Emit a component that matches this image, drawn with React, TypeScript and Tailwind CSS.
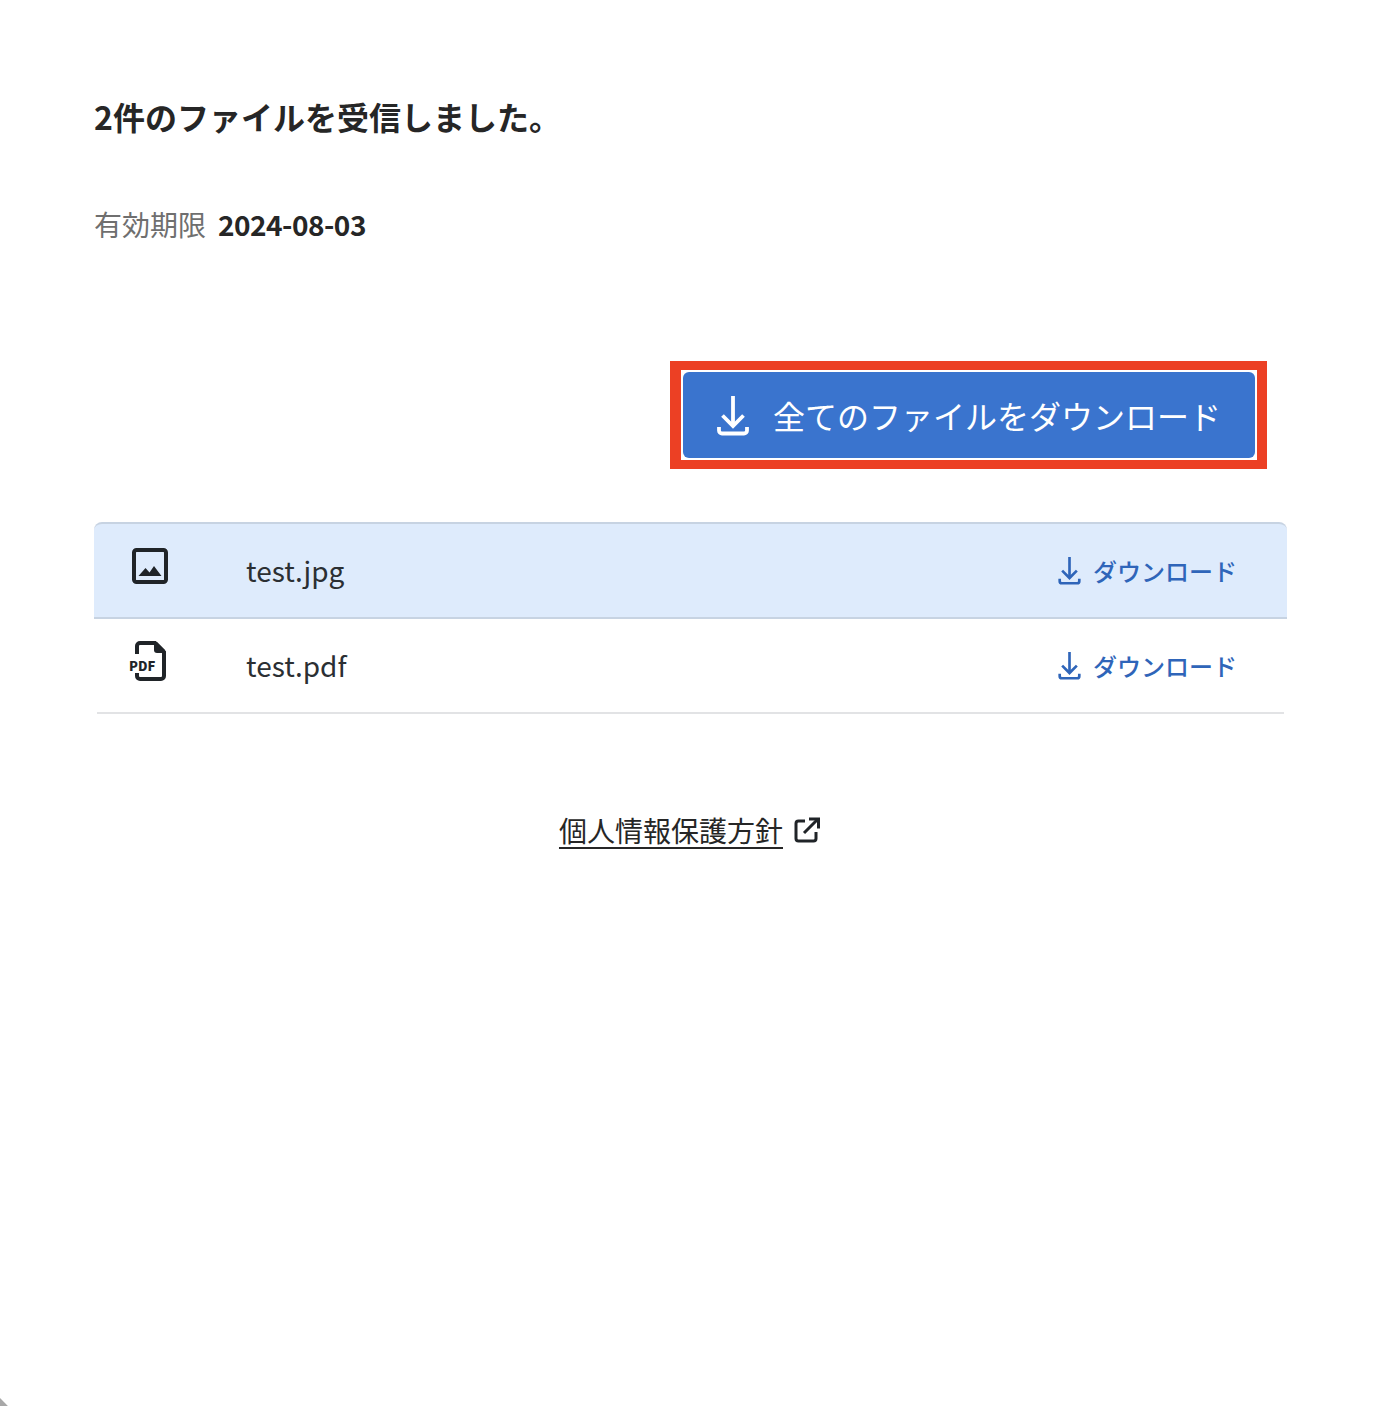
import React from 'react'

const JP = 'font-["Noto_Sans_CJK_JP","Noto_Sans",sans-serif]'

function DownloadIcon({ className }: { className: string }) {
  return (
    <svg viewBox="0 0 32 40" fill="none" stroke="currentColor" strokeWidth="3.8" className={className}>
      <path d="M16 0V29" />
      <path d="M5.500 19.500L16 30l10.500-10.500" />
      <path d="M2 31v3.500a3 3 0 0 0 3 3h22a3 3 0 0 0 3-3V31" />
    </svg>
  )
}

function ImageIcon() {
  return (
    <svg viewBox="0 0 36 36" className="w-9 h-9 text-[#202428]">
      <rect x="2" y="2" width="32" height="32" rx="2.5" fill="none" stroke="currentColor" strokeWidth="4" />
      <path d="M6.500 28l7-8 4 4.500 4.500-6.500 7.500 10z" fill="currentColor" />
    </svg>
  )
}

function PdfIcon() {
  return (
    <div className="relative w-9 h-10">
      <svg viewBox="0 0 36 40" className="w-9 h-10 text-[#202428]">
        <path
          d="M6 13V5a3 3 0 0 1 3-3h15l9 9v24a3 3 0 0 1-3 3H9a3 3 0 0 1-3-3v-3"
          fill="none"
          stroke="currentColor"
          strokeWidth="4"
        />
        <path d="M23 1h3l8 8v3h-8a3 3 0 0 1-3-3z" fill="currentColor" />
      </svg>
      <span className={`absolute left-[-2px] top-[18px] text-[13px] leading-[13px] font-black text-[#202428] ${JP}`}>PDF</span>
    </div>
  )
}

function ExternalIcon() {
  return (
    <svg viewBox="0 0 26 26" fill="none" stroke="currentColor" strokeWidth="3" className="w-[26px] h-[26px] text-[#202428]">
      <path d="M11 4H4.500A2.500 2.500 0 0 0 2 6.500v15A2.500 2.500 0 0 0 4.500 24h15a2.500 2.500 0 0 0 2.500-2.500V15" />
      <path d="M10 16L24 2" />
      <path d="M15 2h9.500v9.500" />
    </svg>
  )
}

function FileRow({ name, icon, active }: { name: string; icon: React.ReactNode; active?: boolean }) {
  return (
    <div
      className={
        active
          ? 'flex items-center h-[97px] bg-[#deebfc] border-t-2 border-b-2 border-[#c7d3e2] rounded-t-lg'
          : 'flex items-center h-[95px] mx-[3px] border-b-2 border-[#e2e3e5]'
      }
    >
      <div className={active ? 'w-[152px] pl-[38px] mt-[-10px]' : 'w-[149px] pl-[34px] mt-[-10px]'}>{icon}</div>
      <span className="text-[28px] text-[#2b2f33] flex-1 mt-[-2px]">{name}</span>
      <a className={`flex items-center gap-[12px] ${active ? 'mr-[50px]' : 'mr-[47px]'} text-[24px] font-medium text-[#2f65b9]`}>
        <DownloadIcon className="w-[23px] h-[28px]" />
        <span>ダウンロード</span>
      </a>
    </div>
  )
}

export default function App() {
  return (
    <div className={`relative min-h-[1406px] bg-white pl-[94px] pr-[95px] pt-[89px] overflow-hidden ${JP}`}>
      <h1 className="text-[32px] leading-[54px] font-bold text-[#262626]">2件のファイルを受信しました。</h1>

      <div className="flex items-center gap-[12px] mt-[54px] h-[54px]">
        <span className="text-[28px] text-[#6f6f6f]">有効期限</span>
        <span className="text-[28px] font-bold text-[#262626] tracking-[-0.5px]">2024-08-03</span>
      </div>

      <div className="flex justify-end mt-[110px] mr-[20px]">
        <div className="border-y-[9px] border-l-[11px] border-r-[10px] border-[#ec4024] p-[2px] bg-white">
          <button className="flex items-center w-[572px] h-[86px] pl-[34px] bg-[#3a74ce] rounded-md text-white text-[32px]">
            <DownloadIcon className="w-8 h-10 mr-[24px] mt-[2px]" />
            <span>全てのファイルをダウンロード</span>
          </button>
        </div>
      </div>

      <div className="mt-[53px]">
        <FileRow name="test.jpg" icon={<ImageIcon />} active />
        <FileRow name="test.pdf" icon={<PdfIcon />} />
      </div>

      <div className="flex justify-center items-center gap-[11px] mt-[89px] pr-[2px]">
        <a className="text-[28px] leading-[54px] text-[#262626] underline underline-offset-[5px]">個人情報保護方針</a>
        <ExternalIcon />
      </div>

      {/* window corner */}
      <div className="absolute left-[-8px] bottom-[-8px] w-[14px] h-[14px] rotate-45 bg-[#a8a8a8]" />
    </div>
  )
}
